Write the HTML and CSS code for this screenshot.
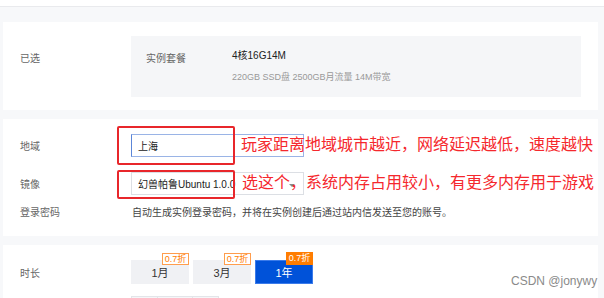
FILE: index.html
```html
<!DOCTYPE html>
<html lang="zh-CN">
<head>
    <meta charset="UTF-8">
    <meta name="viewport" content="width=device-width, initial-scale=1.0">
    <title>购买实例</title>
    <link rel="stylesheet" href="styles.css">
</head>
<body>

<div class="topbar"></div>

<div class="page">
    <!-- 已选配置 -->
    <div class="card card-selected">
        <div class="label">已选</div>
        <div class="summary">
            <div class="summary-name">实例套餐</div>
            <div class="summary-spec">
                <div class="spec-main">4核16G14M</div>
                <div class="spec-sub">220GB SSD盘 2500GB月流量 14M带宽</div>
            </div>
        </div>
    </div>

    <!-- 地域 / 镜像 / 密码 -->
    <div class="card card-form">
        <div class="form-row">
            <div class="label">地域</div>
            <div class="input input-focus">上海</div>
        </div>
        <div class="form-row">
            <div class="label">镜像</div>
            <div class="input select">幻兽帕鲁Ubuntu 1.0.0<span class="arrow"></span></div>
        </div>
        <div class="form-row row-text">
            <div class="label">登录密码</div>
            <div class="hint">自动生成实例登录密码，并将在实例创建后通过站内信发送至您的账号。</div>
        </div>

        <!-- 标注 -->
        <div class="mark mark-region"></div>
        <div class="mark mark-image"></div>
        <div class="note note-region">玩家距离地域城市越近，网络延迟越低，速度越快</div>
        <div class="note note-image">选这个，系统内存占用较小，有更多内存用于游戏</div>
    </div>

    <!-- 时长 -->
    <div class="card card-period">
        <div class="period-row">
            <div class="label">时长</div>
            <div class="tabs">
                <div class="tab">1月<span class="badge">0.7折</span></div>
                <div class="tab">3月<span class="badge">0.7折</span></div>
                <div class="tab active">1年<span class="badge">0.7折</span></div>
            </div>
        </div>
        <div class="period-row">
            <div class="label"></div>
            <div class="mini-tabs">
                <div class="mini"></div>
                <div class="mini wide"></div>
                <div class="mini"></div>
            </div>
        </div>
    </div>
</div>

<div class="watermark">CSDN @jonywy</div>

</body>
</html>
```

FILE: styles.css
```css
body {
    font-family: 'Liberation Sans', 'Noto Sans CJK SC', sans-serif;
    background-color: #f7f8fa;
    color: #333;
    margin: 0;
    padding: 0;
    font-size: 10px;
    overflow: hidden;
}

.topbar {
    height: 6px;
    background-color: #fff;
    border-bottom: 1px solid #e9eaed;
}

.page {
    padding: 15px 6px 0 3px;
    display: flex;
    flex-direction: column;
    gap: 9px;
}

.card {
    background-color: #fff;
    padding: 0 17px;
    position: relative;
}

.label {
    width: 111px;
    flex-shrink: 0;
    color: #666;
    font-size: 10px;
}

/* 已选 */
.card-selected {
    display: flex;
    padding-top: 14px;
    padding-bottom: 13px;
}

.card-selected .label {
    padding-top: 14px;
}

.summary {
    flex: 1;
    height: 61px;
    background-color: #f5f6f8;
    display: flex;
    padding-left: 15px;
    box-sizing: border-box;
}

.summary-name {
    width: 86px;
    color: #666;
    padding-top: 14px;
}

.summary-spec {
    padding-top: 14px;
}

.spec-main {
    color: #222;
    line-height: 12px;
}

.spec-sub {
    margin-top: 8px;
    font-size: 9px;
    color: #999;
}

/* 表单 */
.card-form {
    padding-top: 15px;
    padding-bottom: 17px;
    display: flex;
    flex-direction: column;
    gap: 15px;
}

.form-row {
    display: flex;
    align-items: center;
}

.row-text {
    margin-top: -6px;
}

.input {
    width: 173px;
    height: 23px;
    box-sizing: border-box;
    border: 1px solid #dcdfe4;
    padding-left: 6px;
    display: flex;
    align-items: center;
    color: #222;
    position: relative;
}

.input-focus {
    border-color: #9ab4e6;
    border-left-color: #5c86d8;
}

.arrow {
    position: absolute;
    right: 8px;
    top: 11px;
    border-left: 3px solid transparent;
    border-right: 3px solid transparent;
    border-top: 3px solid #888;
}

.hint {
    color: #444;
    margin-left: 1px;
}

/* 标注 */
.mark {
    position: absolute;
    left: 114px;
    width: 118px;
    border: 2px solid #e8262b;
    border-radius: 2px;
    box-sizing: border-box;
}

.mark-region {
    top: 7px;
    height: 39px;
}

.mark-image {
    top: 51px;
    height: 29px;
}

.note {
    position: absolute;
    font-size: 16px;
    line-height: 20px;
    color: #f5282d;
    white-space: nowrap;
}

.note-region {
    left: 238px;
    top: 16px;
}

.note-image {
    left: 239px;
    top: 54px;
}

/* 时长 */
.card-period {
    padding-top: 15px;
    display: flex;
    flex-direction: column;
    gap: 12px;
    height: 60px;
}

.period-row {
    display: flex;
    align-items: center;
}

.tabs {
    display: flex;
    gap: 4px;
}

.tab {
    width: 58px;
    height: 24px;
    background-color: #f0f1f4;
    color: #333;
    font-size: 11px;
    display: flex;
    align-items: center;
    justify-content: center;
    position: relative;
}

.tab.active {
    background-color: #0052d9;
    color: #fff;
    box-shadow: inset 0 0 0 1px #3b7bea;
}

.badge {
    position: absolute;
    top: -7px;
    right: 0;
    width: 27px;
    height: 12px;
    box-sizing: border-box;
    border: 1px solid #ff9d4d;
    background-color: #fff;
    color: #ff7d00;
    font-size: 9px;
    line-height: 10px;
    text-align: center;
    white-space: nowrap;
}

.tab.active .badge {
    top: -8px;
    height: 13px;
    line-height: 11px;
    background-color: #ff7d00;
    border-color: #ff7d00;
    color: #fff;
}

.mini-tabs {
    display: flex;
}

.mini {
    width: 25px;
    height: 20px;
    border: 1px solid #e3e5e9;
    margin-right: -1px;
    background-color: #f5f6f8;
}

.mini.wide {
    width: 34px;
}

.watermark {
    position: absolute;
    left: 511px;
    top: 274px;
    font-size: 12px;
    color: #8a8a8a;
}
```
